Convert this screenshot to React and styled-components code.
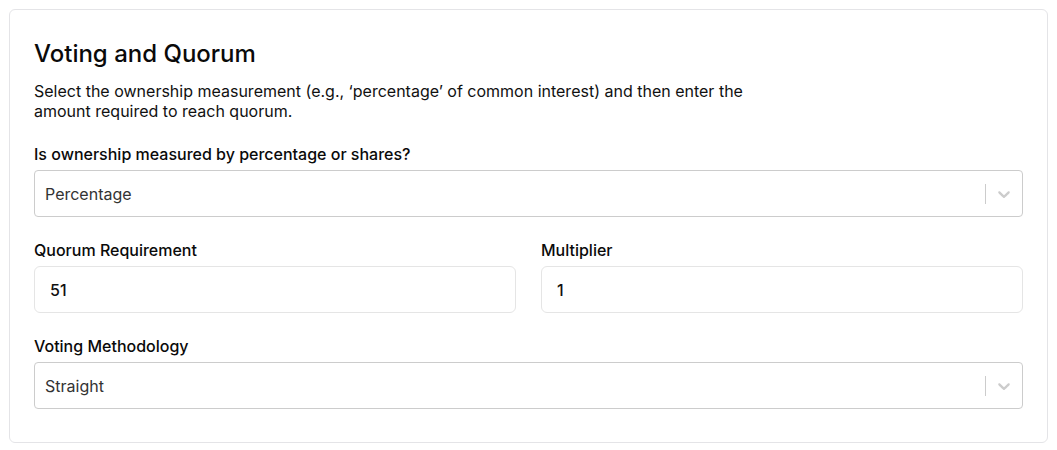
import styled, { createGlobalStyle } from "styled-components";

const Global = createGlobalStyle`
  body {
    margin: 0;
    background: #fff;
    font-family: Inter, "Noto Sans", sans-serif;
    color: #111;
  }
`;

const Page = styled.div`
  padding: 9px 9px 0 9px;
`;

const Card = styled.div`
  border: 1px solid #e4e4e7;
  border-radius: 6px;
  padding: 29px 24px 33px 24px;
  display: flex;
  flex-direction: column;
`;

const Title = styled.h2`
  margin: 0;
  font-size: 24px;
  line-height: 30px;
  font-weight: 500;
  color: #0a0a0a;
`;

const Description = styled.p`
  margin: 12px 0 0 0;
  max-width: 760px;
  font-size: 16px;
  line-height: 20px;
  color: #111;
`;

const Field = styled.div`
  display: flex;
  flex-direction: column;
  gap: 6px;
  margin-top: ${(p) => p.$top || 23}px;
  flex: 1;
`;

const Row = styled.div`
  display: flex;
  gap: 25px;
`;

const Label = styled.label`
  font-size: 16px;
  line-height: 20px;
  font-weight: 500;
  color: #0a0a0a;
`;

const SelectBox = styled.div`
  height: 47px;
  box-sizing: border-box;
  border: 1px solid #cccccc;
  border-radius: 4px;
  display: flex;
  align-items: center;
  padding-left: 10px;
`;

const SelectValue = styled.span`
  flex: 1;
  font-size: 16px;
  color: #333;
`;

const Separator = styled.span`
  width: 1px;
  height: 20px;
  background: #cccccc;
`;

const Chevron = styled.span`
  display: flex;
  padding: 0 8px;
  color: #cccccc;
`;

const Input = styled.input`
  height: 47px;
  box-sizing: border-box;
  border: 1px solid #e5e5e5;
  border-radius: 6px;
  padding: 0 15px;
  font-family: inherit;
  font-size: 16px;
  font-weight: 500;
  color: #111;
  outline: none;
  width: 100%;
`;

function Select({ value }) {
  return (
    <SelectBox>
      <SelectValue>{value}</SelectValue>
      <Separator />
      <Chevron>
        <svg width="20" height="20" viewBox="0 0 20 20" fill="currentColor">
          <path d="M4.516 7.548c0.436-0.446 1.043-0.481 1.576 0l3.908 3.747 3.908-3.747c0.533-0.481 1.141-0.446 1.574 0 0.436 0.445 0.408 1.197 0 1.615-0.406 0.418-4.695 4.502-4.695 4.502-0.217 0.223-0.502 0.335-0.787 0.335s-0.57-0.112-0.789-0.335c0 0-4.287-4.084-4.695-4.502s-0.436-1.17 0-1.615z" />
        </svg>
      </Chevron>
    </SelectBox>
  );
}

export default function App() {
  return (
    <Page>
      <Global />
      <Card>
        <Title>Voting and Quorum</Title>
        <Description>
          Select the ownership measurement (e.g., ‘percentage’ of common
          interest) and then enter the amount required to reach quorum.
        </Description>
        <Field>
          <Label>Is ownership measured by percentage or shares?</Label>
          <Select value="Percentage" />
        </Field>
        <Row>
          <Field>
            <Label>Quorum Requirement</Label>
            <Input defaultValue="51" />
          </Field>
          <Field>
            <Label>Multiplier</Label>
            <Input defaultValue="1" />
          </Field>
        </Row>
        <Field>
          <Label>Voting Methodology</Label>
          <Select value="Straight" />
        </Field>
      </Card>
    </Page>
  );
}
